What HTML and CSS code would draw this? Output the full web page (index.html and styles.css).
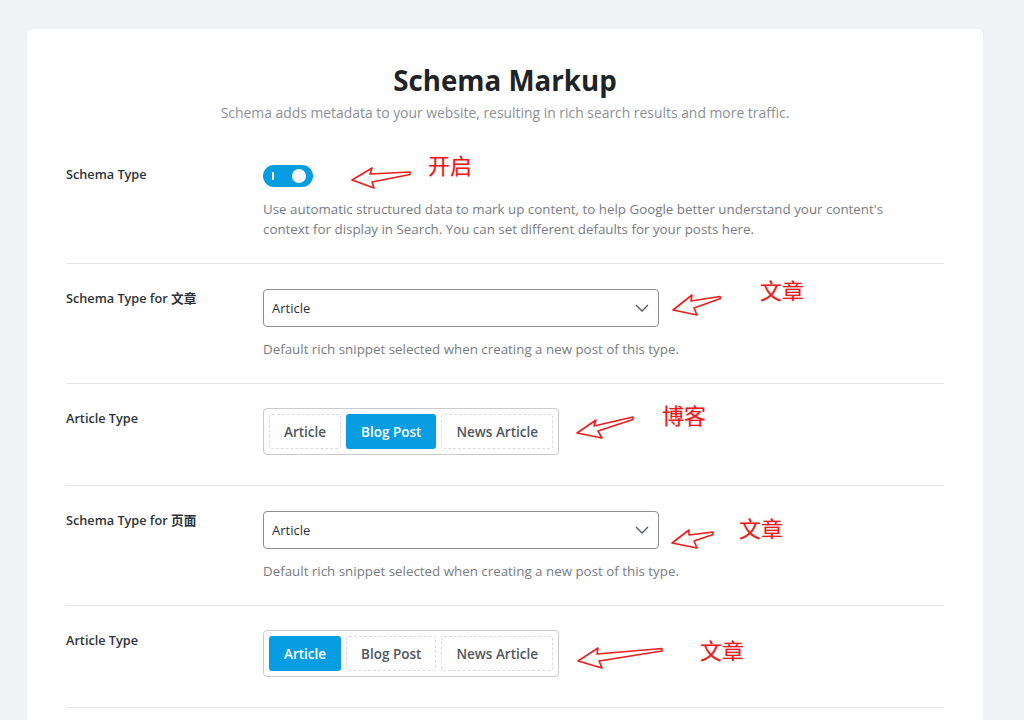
FILE: index.html
```html
<!DOCTYPE html>
<html lang="en">
<head>
  <meta charset="UTF-8" />
  <meta name="viewport" content="width=device-width, initial-scale=1.0"/>
  <title>Schema Markup</title>
  <link rel="stylesheet" href="styles.css">
</head>
<body>
<div class="panel">
  <div class="panel-head">
    <h1>Schema Markup</h1>
    <p class="subtitle">Schema adds metadata to your website, resulting in rich search results and more traffic.</p>
  </div>

  <div class="row">
    <div class="row-label">Schema Type</div>
    <div class="row-field">
      <span class="toggle on"><span class="toggle-bar"></span><span class="toggle-knob"></span></span>
      <p class="desc">Use automatic structured data to mark up content, to help Google better understand your content's context for display in Search. You can set different defaults for your posts here.</p>
    </div>
  </div>

  <div class="row">
    <div class="row-label">Schema Type for 文章</div>
    <div class="row-field">
      <div class="select">
        <span>Article</span>
        <svg class="chevron" width="14" height="8" viewBox="0 0 14 8"><path d="M1 1l6 6 6-6" fill="none" stroke="#50575e" stroke-width="1.3"/></svg>
      </div>
      <p class="desc">Default rich snippet selected when creating a new post of this type.</p>
    </div>
  </div>

  <div class="row">
    <div class="row-label">Article Type</div>
    <div class="row-field">
      <div class="btn-group">
        <span class="btn">Article</span>
        <span class="btn active">Blog Post</span>
        <span class="btn">News Article</span>
      </div>
    </div>
  </div>

  <div class="row">
    <div class="row-label">Schema Type for 页面</div>
    <div class="row-field">
      <div class="select">
        <span>Article</span>
        <svg class="chevron" width="14" height="8" viewBox="0 0 14 8"><path d="M1 1l6 6 6-6" fill="none" stroke="#50575e" stroke-width="1.3"/></svg>
      </div>
      <p class="desc">Default rich snippet selected when creating a new post of this type.</p>
    </div>
  </div>

  <div class="row">
    <div class="row-label">Article Type</div>
    <div class="row-field">
      <div class="btn-group">
        <span class="btn active">Article</span>
        <span class="btn">Blog Post</span>
        <span class="btn">News Article</span>
      </div>
    </div>
  </div>

  <div class="row-tail"></div>
</div>

<!-- hand drawn notes on top of the screenshot -->
<svg class="arrows" width="1024" height="720" viewBox="0 0 1024 720">
  <g fill="none" stroke="#ee1c1c" stroke-width="1.6" stroke-linejoin="round">
    <polygon points="352,180 372,168 370,174 410,172 410,174.5 372,182 374,188"/>
    <polygon points="673,310 692,295 691,301 720,296.5 720.5,298.5 694,308 697,315"/>
    <polygon points="577,433 596,420 594,426 633,417 633,419.5 598,431 602,438"/>
    <polygon points="672,543 689,530 689,535 713,532 713,534.5 694,541 697,548"/>
    <polygon points="578,661 598,648 597,654 662,648.5 662,651 599,661 602,668"/>
  </g>
</svg>
<span class="note n1">开启</span>
<span class="note n2">文章</span>
<span class="note n3">博客</span>
<span class="note n4">文章</span>
<span class="note n5">文章</span>
</body>
</html>
```

FILE: styles.css
```css
body {
  margin: 0;
  background: #f0f1f3;
  font-family: 'Open Sans', 'Noto Sans CJK SC', sans-serif;
  color: #1d2327;
}
.panel {
  width: 878px;
  margin: 29px 0 0 27px;
  padding: 32px 39px 40px;
  background: #fff;
  border-radius: 6px;
  box-shadow: 0 1px 2px rgba(0,0,0,0.04);
}
.panel-head {
  text-align: center;
  margin-bottom: 17px;
}
h1 {
  margin: 0;
  font-size: 27.7px;
  line-height: 38px;
  font-weight: 700;
  color: #1d2327;
}
.subtitle {
  margin: 4px 0 0;
  font-size: 13.9px;
  line-height: 20px;
  color: #8c8f94;
}
.row {
  display: flex;
  padding: 25px 0 24px;
  border-bottom: 1px solid #e6e6e8;
}
.row-label {
  width: 197px;
  flex-shrink: 0;
  font-size: 12.7px;
  line-height: 18px;
  font-weight: 600;
  color: #2c3338;
}
.row-field {
  flex: 1;
}
.desc {
  margin: 12px 0 0;
  font-size: 13.35px;
  line-height: 20px;
  color: #787c82;
  max-width: 640px;
}
.toggle {
  position: relative;
  display: block;
  width: 50px;
  height: 22px;
  border-radius: 11px;
  background: #089de0;
}
.toggle-bar {
  position: absolute;
  left: 9px;
  top: 7px;
  width: 2px;
  height: 8px;
  background: #fff;
}
.toggle-knob {
  position: absolute;
  right: 7px;
  top: 4px;
  width: 14px;
  height: 14px;
  border-radius: 50%;
  background: #fff;
}
.select {
  width: 377px;
  height: 36px;
  display: flex;
  align-items: center;
  justify-content: space-between;
  padding: 0 9px 0 8px;
  border: 1px solid #8c8f94;
  border-radius: 4px;
  font-size: 13px;
  color: #2c3338;
}
.chevron {
  display: block;
}
.btn-group {
  display: inline-flex;
  gap: 5px;
  padding: 5px;
  border: 1px solid #c9cacd;
  border-radius: 4px;
  margin: -1px 0 6px;
}
.btn {
  display: flex;
  align-items: center;
  height: 33px;
  padding: 0 14px;
  border: 1px dashed #dcdcde;
  border-radius: 3px;
  font-size: 13.5px;
  font-weight: 600;
  color: #50575e;
}
.btn.active {
  background: #069de3;
  border-color: #069de3;
  color: #fff;
}
.row-tail {
  height: 40px;
}
.arrows {
  position: absolute;
  left: 0;
  top: 0;
  pointer-events: none;
}
.note {
  position: absolute;
  font-family: 'Noto Sans CJK SC', sans-serif;
  font-size: 22px;
  line-height: 26px;
  color: #f01818;
  text-shadow: 0 0 2px rgba(0,0,0,0.25), 0 0 1px #fff;
}
.n1 { left: 428px; top: 151px; }
.n2 { left: 760px; top: 276px; }
.n3 { left: 662px; top: 401px; }
.n4 { left: 739px; top: 514px; }
.n5 { left: 700px; top: 636px; }
```
